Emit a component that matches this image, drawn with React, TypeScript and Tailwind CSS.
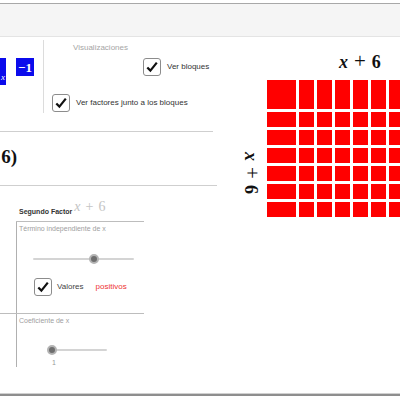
import React from "react";

const sans = { fontFamily: '"Liberation Sans", Arial, sans-serif' };
const serif = { fontFamily: '"Liberation Serif", "Times New Roman", serif' };

function Check() {
  return (
    <div className="w-[18px] h-[18px] shrink-0 border border-[#8c8c8c] rounded-[3px] bg-white flex items-center justify-center">
      <svg width="14" height="14" viewBox="0 0 14 14">
        <path d="M2.3 7.4 L5.4 10.6 L11.8 2.6" fill="none" stroke="#111" strokeWidth="2.2" strokeLinejoin="miter" />
      </svg>
    </div>
  );
}

function Slider({ width, knob }: { width: number; knob: number }) {
  return (
    <div className="relative h-[2px] bg-[#d4d4d4] rounded-full" style={{ width }}>
      <div
        className="absolute top-[-4px] w-[10px] h-[10px] rounded-full bg-[#6e6e6e] border-2 border-[#b4b4b4]"
        style={{ left: knob - 5 }}
      />
    </div>
  );
}

function Expr({ size, bold, wide }: { size: number; bold?: boolean; wide?: boolean }) {
  return (
    <span className={`whitespace-nowrap ${bold ? "font-bold" : ""}`} style={{ ...serif, fontSize: size, lineHeight: `${size}px` }}>
      <span className="italic">x</span>
      <span className={wide ? "mx-[6px] font-normal text-[21px]" : "mx-[5px]"}>+</span>
      <span>6</span>
    </span>
  );
}

export default function App() {
  return (
    <div className="w-[400px] h-[400px] bg-white overflow-hidden pt-[3px]" style={sans}>
      {/* top bar */}
      <div className="h-[34px] bg-[#f5f5f5] border-t border-[#a8a8a8] border-b border-b-[#e4e4e4]" />

      {/* main */}
      <div className="h-[356px] flex">
        {/* left panel */}
        <div className="w-[217px] shrink-0 flex flex-col">
          {/* section A */}
          <div className="h-[94px] flex">
            <div className="w-[44px] mt-[3px] h-[73px] border-r border-[#dcdcdc] pt-[18px] flex items-start">
              <div className="ml-[-16px] w-[22px] h-[27px] bg-[#0b0bec] flex items-end justify-end pr-[1px] pb-[3px]">
                <span className="text-white text-[9px] leading-[9px] italic" style={serif}>x</span>
              </div>
              <div className="ml-[10px] w-[18px] h-[18px] bg-[#0b0bec] flex items-center justify-center">
                <span className="text-white font-bold text-[13px] leading-[13px]" style={serif}>−1</span>
              </div>
            </div>
            <div className="flex-1 flex flex-col">
              <div className="ml-[29px] mt-[6px] text-[8px] leading-[10px] text-[#a6a6a6]">Visualizaciones</div>
              <div className="ml-[99px] mt-[5px] flex items-center gap-[6px]">
                <Check />
                <span className="text-[8px] leading-[10px] text-[#333]">Ver bloques</span>
              </div>
              <div className="ml-[8px] mt-[18px] flex items-center gap-[6px]">
                <Check />
                <span className="text-[8px] leading-[10px] text-[#333] whitespace-nowrap">Ver factores junto a los bloques</span>
              </div>
            </div>
          </div>
          <div className="w-[213px] h-px bg-[#cfcfcf]" />

          {/* section B */}
          <div className="h-[53px]">
            <div className="mt-[15px] w-[17px] flex justify-end">
              <span className="whitespace-nowrap font-bold text-[19px] leading-[19px] text-[#111]" style={serif}>
                (<span className="italic">x</span> + 6)(<span className="italic">x</span> + 6)
              </span>
            </div>
          </div>
          <div className="w-[217px] h-px bg-[#cfcfcf]" />

          {/* section C */}
          <div className="h-[35px] flex items-end pb-[3px]">
            <span className="ml-[19px] font-bold text-[7px] leading-[10px] text-[#333] whitespace-nowrap mb-[1px]">Segundo Factor</span>
            <span className="ml-[2px] text-[#c4c4c4]">
              <Expr size={14} />
            </span>
          </div>
          <div className="ml-[16px] w-[128px] h-px bg-[#bdbdbd]" />
          <div className="ml-[16px] w-[128px] h-[91px] border-l border-[#b0b0b0] flex flex-col">
            <div className="ml-[2px] mt-[2px] text-[7px] leading-[10px] text-[#a0a0a0] whitespace-nowrap">Término independiente de x</div>
            <div className="ml-[16px] mt-[24px]">
              <Slider width={101} knob={61} />
            </div>
            <div className="ml-[17px] mt-[18px] flex items-center gap-[5px]">
              <Check />
              <span className="text-[8px] leading-[10px] text-[#444]">Valores</span>
              <span className="ml-[7px] text-[8px] leading-[10px] text-[#ee3333]">positivos</span>
            </div>
          </div>
          <div className="w-[144px] h-px bg-[#bdbdbd]" />
          <div className="ml-[16px] w-[128px] h-[53px] border-l border-[#b0b0b0] flex flex-col">
            <div className="ml-[2px] mt-[2px] text-[7px] leading-[10px] text-[#a0a0a0] whitespace-nowrap">Coeficiente de x</div>
            <div className="ml-[35px] mt-[23px]">
              <Slider width={55} knob={0} />
            </div>
            <div className="ml-[35px] mt-[7px] text-[7px] leading-[10px] text-[#999]">1</div>
          </div>
        </div>

        {/* right panel: graphics canvas */}
        <div className="relative flex-1">
          <div className="absolute left-[122px] top-[14px] text-[#111]">
            <Expr size={18} bold wide />
          </div>
          <div className="absolute left-[33px] top-[136px] w-0 h-0 flex items-center justify-center text-[#111]">
            <div className="rotate-90">
              <Expr size={18} bold wide />
            </div>
          </div>
          <div className="ml-[50px] mt-[43px] grid grid-cols-[29px_repeat(6,15px)] grid-rows-[29px_repeat(6,15px)] gap-[3px] w-max">
            {Array.from({ length: 49 }).map((_, i) => (
              <div key={i} className="bg-[#ff0000]" />
            ))}
          </div>
        </div>
      </div>

      {/* bottom border */}
      <div className="h-px bg-[#d0d0d0]" />
      <div className="h-[2px] bg-[#8e8e8e]" />
    </div>
  );
}
